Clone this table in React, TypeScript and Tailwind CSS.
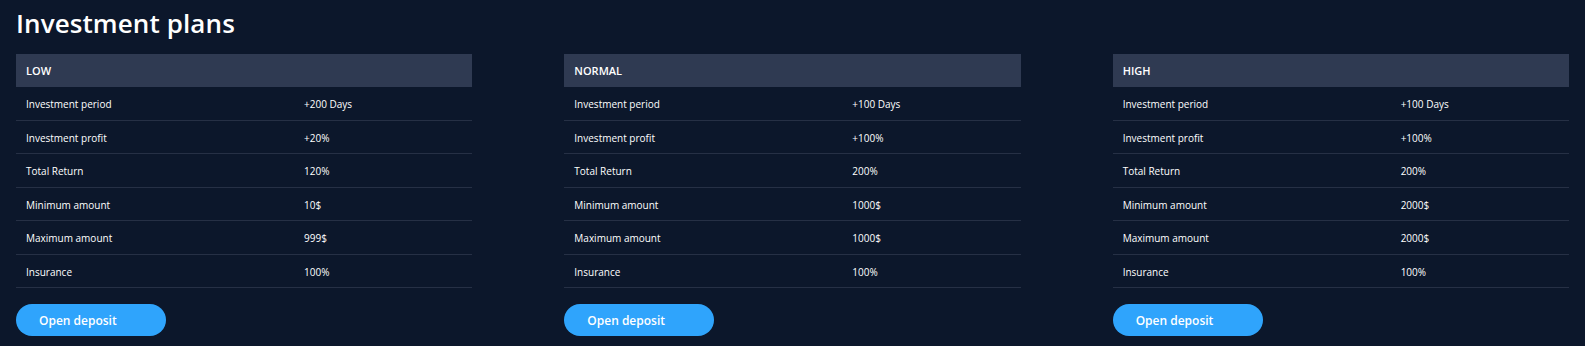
const plans = [
  {
    name: 'LOW',
    rows: [
      ['Investment period', '+200 Days'],
      ['Investment profit', '+20%'],
      ['Total Return', '120%'],
      ['Minimum amount', '10$'],
      ['Maximum amount', '999$'],
      ['Insurance', '100%'],
    ],
  },
  {
    name: 'NORMAL',
    rows: [
      ['Investment period', '+100 Days'],
      ['Investment profit', '+100%'],
      ['Total Return', '200%'],
      ['Minimum amount', '1000$'],
      ['Maximum amount', '1000$'],
      ['Insurance', '100%'],
    ],
  },
  {
    name: 'HIGH',
    rows: [
      ['Investment period', '+100 Days'],
      ['Investment profit', '+100%'],
      ['Total Return', '200%'],
      ['Minimum amount', '2000$'],
      ['Maximum amount', '2000$'],
      ['Insurance', '100%'],
    ],
  },
];

const App = () => {
  return (
    <div
      className="min-h-[346px] bg-[#0c172b] px-4 pt-[3px] text-white"
      style={{ fontFamily: '"Open Sans", "Noto Sans", sans-serif' }}
    >
      <h1 className="text-[26px] font-semibold leading-[40px] tracking-[0.1px]">Investment plans</h1>

      <div className="mt-[11px] grid grid-cols-3 gap-x-[92px]">
        {plans.map((plan) => (
          <div key={plan.name}>
            <div className="flex h-[33px] items-center bg-[#2f3a52] px-[10px] pt-[1px] text-[11px] font-semibold">
              {plan.name}
            </div>
            {plan.rows.map(([label, value]) => (
              <div
                key={label}
                className="flex h-[33.5px] items-center border-b border-[#263045] px-[10px] pt-[3px] text-[10px]"
              >
                <span className="w-[278px] shrink-0">{label}</span>
                <span>{value}</span>
              </div>
            ))}
            <button className="mt-[16px] h-[32px] w-[150px] rounded-full bg-[#2fa4fc] pl-[23px] pt-[2px] text-left text-[12px] font-semibold">
              Open deposit
            </button>
          </div>
        ))}
      </div>
    </div>
  );
};

export default App;
